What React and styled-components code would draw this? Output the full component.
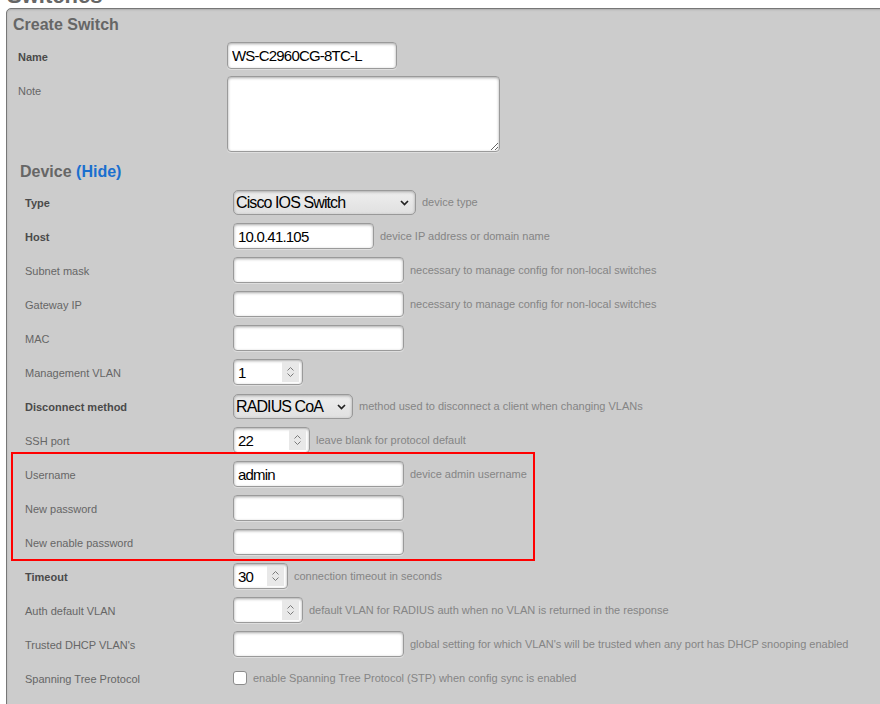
import React from 'react';
import styled, { createGlobalStyle } from 'styled-components';

const Global = createGlobalStyle`
  html, body { margin: 0; padding: 0; background: #fff; overflow: hidden; }
  body { font-family: "Liberation Sans", Arial, sans-serif; }
  * { box-sizing: border-box; }
`;

const Page = styled.div`
  height: 704px;
  overflow: hidden;
`;

const PageTitle = styled.h2`
  margin: -15px 0 0 7px;
  font-size: 22px;
  line-height: 22px;
  font-weight: bold;
  color: #666;
`;

const Panel = styled.section`
  margin: 1px -30px 0 6px;
  min-height: 800px;
  background: #cccccc;
  border: 1px solid #777;
  border-radius: 5px 5px 0 0;
  box-shadow: inset 0 1px 2px rgba(0, 0, 0, 0.15);
  padding: 0 0 0 6px;
`;

const PanelTitle = styled.h3`
  margin: 6px 0 0;
  font-size: 16px;
  line-height: 20px;
  font-weight: bold;
  color: #666;
`;

const TopFields = styled.div`
  margin-top: 7px;
  display: flex;
  flex-direction: column;
  gap: 7px;
`;

const Row = styled.div`
  display: grid;
  grid-template-columns: 214px 1fr;
  align-items: ${(p) => (p.$top ? 'start' : 'center')};
  min-height: ${(p) => p.$h || 0}px;
`;

const Label = styled.div`
  padding-left: ${(p) => p.$pad ?? 6}px;
  padding-top: ${(p) => p.$padTop || 0}px;
  font-size: 11px;
  line-height: 13px;
  font-weight: ${(p) => (p.$bold ? 'bold' : 'normal')};
  color: ${(p) => (p.$bold ? '#4a4a4a' : '#666')};
  white-space: nowrap;
`;

const Field = styled.div`
  display: flex;
  align-items: center;
  gap: 6px;
`;

const Hint = styled.span`
  font-size: 11px;
  color: #858585;
  white-space: nowrap;
`;

const boxLook = `
  background: #fff;
  border: 1px solid #9a9a9a;
  border-radius: 4px;
  box-shadow: inset 0 1px 3px rgba(0, 0, 0, 0.35), 0 1px 0 rgba(255,255,255,0.35);
`;

const TextInput = styled.input`
  ${boxLook}
  width: ${(p) => p.$w}px;
  height: ${(p) => p.$h || 26}px;
  padding: 0 4px;
  font-family: "Liberation Sans", Arial, sans-serif;
  font-size: 15px;
  letter-spacing: -0.8px;
  color: #000;
  outline: none;
`;

const TextArea = styled.textarea`
  ${boxLook}
  width: 273px;
  height: 76px;
  padding: 3px 4px;
  font-family: "Liberation Sans", Arial, sans-serif;
  font-size: 15px;
  outline: none;
  resize: both;
`;

const SelectWrap = styled.div`
  position: relative;
  width: ${(p) => p.$w}px;
  height: 25px;
`;

const Select = styled.select`
  appearance: none;
  -webkit-appearance: none;
  width: 100%;
  height: 100%;
  padding: 0 18px 0 2px;
  border: 1px solid #999;
  border-radius: 5px;
  background: linear-gradient(#eeeeee, #e0e0e0);
  box-shadow: inset 0 1px 3px rgba(0, 0, 0, 0.3);
  font-family: "Liberation Sans", Arial, sans-serif;
  font-size: 16px;
  letter-spacing: -0.9px;
  color: #000;
  outline: none;
`;

const Chevron = styled.svg`
  position: absolute;
  right: 7px;
  top: 10px;
  pointer-events: none;
`;

const NumberBox = styled.div`
  ${boxLook}
  width: ${(p) => p.$w}px;
  height: 26px;
  display: flex;
  align-items: center;
  padding: 2px 3px 2px 0;
`;

const NumberInput = styled.input`
  flex: 1;
  min-width: 0;
  height: 100%;
  border: none;
  background: transparent;
  padding: 0 0 0 4px;
  font-family: "Liberation Sans", Arial, sans-serif;
  font-size: 15px;
  letter-spacing: -0.8px;
  color: #000;
  outline: none;
`;

const Spinner = styled.div`
  width: 17px;
  height: 100%;
  background: #e8e8e8;
  display: flex;
  align-items: center;
  justify-content: center;
`;

const Check = styled.input`
  appearance: none;
  -webkit-appearance: none;
  margin: 0;
  width: 14px;
  height: 14px;
  background: #fff;
  border: 1px solid #8c8c8c;
  border-radius: 3px;
`;

const DeviceSection = styled.div`
  margin-top: 10px;
  padding-left: 6px;
`;

const DeviceTitle = styled.h3`
  margin: 0 0 3px;
  padding-left: 1px;
  font-size: 16px;
  line-height: 20px;
  font-weight: bold;
  color: #666;
`;

const HideLink = styled.a`
  color: #1a6fcf;
  text-decoration: none;
  cursor: pointer;
`;

const Highlight = styled.div`
  position: relative;
  &::after {
    content: '';
    position: absolute;
    top: -5px;
    bottom: -2px;
    left: -8px;
    width: 520px;
    border: 2px solid #f00;
    pointer-events: none;
  }
`;

const SelectBox = ({ w, value, options }) => (
  <SelectWrap $w={w}>
    <Select defaultValue={value}>
      {options.map((o) => (
        <option key={o}>{o}</option>
      ))}
    </Select>
    <Chevron width="9" height="6" viewBox="0 0 9 6">
      <path d="M1 1 L4.5 4.5 L8 1" fill="none" stroke="#222" strokeWidth="1.7" />
    </Chevron>
  </SelectWrap>
);

const NumberField = ({ w, value }) => (
  <NumberBox $w={w}>
    <NumberInput type="text" defaultValue={value} />
    <Spinner>
      <svg width="9" height="16" viewBox="0 0 9 16">
        <path d="M1.5 6.5 L4.5 3.5 L7.5 6.5" fill="none" stroke="#7a7a7a" strokeWidth="1" />
        <path d="M1.5 9.5 L4.5 12.5 L7.5 9.5" fill="none" stroke="#7a7a7a" strokeWidth="1" />
      </svg>
    </Spinner>
  </NumberBox>
);

const DevRow = ({ label, bold, hint, children }) => (
  <Row $h={34}>
    <Label $bold={bold} $padTop={2}>{label}</Label>
    <Field>
      {children}
      {hint && <Hint>{hint}</Hint>}
    </Field>
  </Row>
);

const nonLocal = 'necessary to manage config for non-local switches';

export default function App() {
  return (
    <Page>
      <Global />
      <PageTitle>Switches</PageTitle>
      <Panel>
        <PanelTitle>Create Switch</PanelTitle>
        <TopFields>
          <Row>
            <Label $pad={5} $padTop={3} $bold>Name</Label>
            <Field>
              <TextInput $w={170} $h={27} defaultValue="WS-C2960CG-8TC-L" />
            </Field>
          </Row>
          <Row $top>
            <Label $pad={5} $padTop={9}>Note</Label>
            <Field>
              <TextArea />
            </Field>
          </Row>
        </TopFields>

        <DeviceSection>
          <DeviceTitle>
            Device <HideLink>(Hide)</HideLink>
          </DeviceTitle>

          <DevRow label="Type" bold hint="device type">
            <SelectBox w={183} value="Cisco IOS Switch" options={['Cisco IOS Switch', 'Generic Switch']} />
          </DevRow>
          <DevRow label="Host" bold hint="device IP address or domain name">
            <TextInput $w={141} defaultValue="10.0.41.105" />
          </DevRow>
          <DevRow label="Subnet mask" hint={nonLocal}>
            <TextInput $w={171} />
          </DevRow>
          <DevRow label="Gateway IP" hint={nonLocal}>
            <TextInput $w={171} />
          </DevRow>
          <DevRow label="MAC">
            <TextInput $w={171} />
          </DevRow>
          <DevRow label="Management VLAN">
            <NumberField w={70} value="1" />
          </DevRow>
          <DevRow label="Disconnect method" bold hint="method used to disconnect a client when changing VLANs">
            <SelectBox w={120} value="RADIUS CoA" options={['RADIUS CoA', 'SNMP']} />
          </DevRow>
          <DevRow label="SSH port" hint="leave blank for protocol default">
            <NumberField w={77} value="22" />
          </DevRow>

          <Highlight>
            <DevRow label="Username" hint="device admin username">
              <TextInput $w={171} defaultValue="admin" />
            </DevRow>
            <DevRow label="New password">
              <TextInput $w={171} type="password" />
            </DevRow>
            <DevRow label="New enable password">
              <TextInput $w={171} type="password" />
            </DevRow>
          </Highlight>

          <DevRow label="Timeout" bold hint="connection timeout in seconds">
            <NumberField w={55} value="30" />
          </DevRow>
          <DevRow label="Auth default VLAN" hint="default VLAN for RADIUS auth when no VLAN is returned in the response">
            <NumberField w={70} value="" />
          </DevRow>
          <DevRow label="Trusted DHCP VLAN's" hint="global setting for which VLAN's will be trusted when any port has DHCP snooping enabled">
            <TextInput $w={171} />
          </DevRow>
          <DevRow label="Spanning Tree Protocol" hint="enable Spanning Tree Protocol (STP) when config sync is enabled">
            <Check type="checkbox" />
          </DevRow>
          <DevRow label="">
            <Check type="checkbox" />
          </DevRow>
        </DeviceSection>
      </Panel>
    </Page>
  );
}
